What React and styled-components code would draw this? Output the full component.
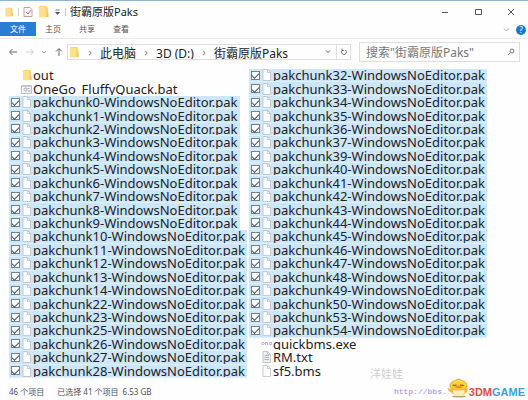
import React, { useState } from "react";
import styled, { createGlobalStyle, css } from "styled-components";

const leftNumbers = [0, 1, 2, 3, 4, 5, 6, 7, 8, 9, 10, 11, 12, 13, 14, 22, 23, 25, 26, 27, 28];
const rightNumbers = [32, 33, 34, 35, 36, 37, 39, 40, 41, 42, 43, 44, 45, 46, 47, 48, 49, 50, 53, 54];

const pak = (n) => ({ name: `pakchunk${n}-WindowsNoEditor.pak`, type: "file", selected: true });

const columns = [
  [
    { name: "out", type: "folder" },
    { name: "OneGo_FluffyQuack.bat", type: "bat" },
    ...leftNumbers.map(pak),
  ],
  [
    ...rightNumbers.map(pak),
    { name: "quickbms.exe", type: "exe" },
    { name: "RM.txt", type: "text" },
    { name: "sf5.bms", type: "file" },
  ],
];

function FolderIcon({ size = 12 }) {
  return (
    <svg width={size} height={size} viewBox="0 0 12 12" aria-hidden="true">
      <path d="M2 1h7.5v1.5h.8V11H2z" fill="#f5d472" />
      <path d="M2 1.5l6 .5v9.5L2 11z" fill="#fde08a" />
      <path d="M9.5 7h1v4h-1z" fill="#e8bd4b" />
    </svg>
  );
}

function FileIcon({ type }) {
  if (type === "folder") return <FolderIcon />;
  if (type === "bat") {
    return (
      <svg width="12" height="12" viewBox="0 0 12 12" aria-hidden="true">
        <path d="M.5 2.5h10v8H.5z" fill="#f3f5f6" stroke="#bcc2c6" />
        <path d="M1 3.5h9" stroke="#c5cbd0" />
        <circle cx="4.5" cy="6.5" r="1.5" fill="none" stroke="#9ea8af" />
        <path d="M7 8h2.500M6.500 5.500h2" stroke="#a8b0b5" />
      </svg>
    );
  }
  if (type === "exe") {
    return (
      <svg width="12" height="12" viewBox="0 0 12 12" aria-hidden="true">
        <g fill="none" stroke="#b5aee6">
          <circle cx="2" cy="5.500" r="1.300" />
          <path d="M4.500 7V4.500h2V7M8.500 4.500h2v2h-2z" />
        </g>
      </svg>
    );
  }
  return (
    <svg width="12" height="12" viewBox="0 0 12 12" aria-hidden="true">
      <path d="M2 .5h4.500l3 3v8H2z" fill={type === "text" ? "#eceeef" : "#fdfdfd"} stroke="#b9bfc4" strokeWidth=".8" />
      <path d="M6.500.5v3h3" fill="none" stroke="#b9bfc4" strokeWidth=".8" />
      {type === "text" && <path d="M3.500 4.500h4.500M3.500 6.500h4.500M3.500 8.500h4.500" stroke="#adb3b8" />}
    </svg>
  );
}

function Duck() {
  return (
    <svg width="22" height="20" viewBox="0 0 22 20" aria-hidden="true">
      <ellipse cx="12" cy="18.500" rx="7" ry="1" fill="#b9a470" />
      <path d="M0 10l5 1 12 0 4-1-1 4-4 3H8l-3-2-3-2z" fill="#f2b72c" />
      <path d="M6 11h11c2 4-1 7-5 7s-7-3-6-7z" fill="#ffeeb5" />
      <path d="M3 8C3 3 8 3 9 2l3-1 2 1c4 1 6 3 6 6 0 3-4 4-8 4S3 11 3 8z" fill="#fbd038" stroke="#d99a17" strokeWidth=".7" />
      <path d="M7 4.500c3-2 7-2 9 0" fill="none" stroke="#ffe989" />
      <path d="M5.500 7.500l4-.5M13 7l4 .5" fill="none" stroke="#7a5516" strokeWidth="1.200" />
      <path d="M7 9l4.500-1.500L16 9l-2 1H9z" fill="#e58c1f" />
    </svg>
  );
}

function App() {
  const [picked, setPicked] = useState(() =>
    columns.flat().filter((f) => f.selected).map((f) => f.name)
  );

  const toggle = (name) =>
    setPicked((old) => (old.includes(name) ? old.filter((n) => n !== name) : [...old, name]));

  return (
    <Window>
      <GlobalStyle />
      <TitleBar>
        <FolderIcon size={10} />
        <Divider />
        <svg width="10" height="12" viewBox="0 0 10 12" aria-hidden="true">
          <path d="M1 1.500h6l2 2v7H1z" fill="#fff" stroke="#b5a3a0" />
          <path d="M3 6l2 2 3-4" fill="none" stroke="#d1685d" />
        </svg>
        <FolderIcon size={13} />
        <svg width="7" height="8" viewBox="0 0 7 8" aria-hidden="true">
          <path d="M1.500 2h4" stroke="#777" />
          <path d="M1 4h5L3.500 7z" fill="#555" />
        </svg>
        <Divider />
        <Title>街霸原版Paks</Title>
        <WindowButton aria-label="最小化">
          <svg width="10" height="10" viewBox="0 0 10 10"><path d="M2 5.500h6" stroke="#555" /></svg>
        </WindowButton>
        <WindowButton aria-label="最大化">
          <svg width="10" height="10" viewBox="0 0 10 10"><path d="M2.500 2.500h6v5h-6z" fill="none" stroke="#555" /></svg>
        </WindowButton>
        <WindowButton aria-label="关闭">
          <svg width="10" height="10" viewBox="0 0 10 10"><path d="M2 2l6 6M8 2l-6 6" stroke="#555" /></svg>
        </WindowButton>
      </TitleBar>

      <Ribbon>
        <Tab $active>文件</Tab>
        <Tab>主页</Tab>
        <Tab>共享</Tab>
        <Tab>查看</Tab>
        <RibbonEnd>
          <svg width="7" height="6" viewBox="0 0 7 6" aria-hidden="true">
            <path d="M1 1.500l2.500 2.500L6 1.500" fill="none" stroke="#aaa" />
          </svg>
          <Help aria-label="帮助">?</Help>
        </RibbonEnd>
      </Ribbon>

      <NavRow>
        <NavButtons>
          <NavButton aria-label="后退">
            <svg width="10" height="10" viewBox="0 0 10 10"><path d="M9 5H2M4.500 2l-3 3 3 3" fill="none" stroke="#666" /></svg>
          </NavButton>
          <NavButton aria-label="前进">
            <svg width="10" height="10" viewBox="0 0 10 10"><path d="M1 5h7M5.500 2l3 3-3 3" fill="none" stroke="#ccc" /></svg>
          </NavButton>
          <NavButton aria-label="最近">
            <svg width="6" height="10" viewBox="0 0 6 10"><path d="M1 4l2 2 2-2" fill="none" stroke="#999" /></svg>
          </NavButton>
          <NavButton aria-label="上移">
            <svg width="10" height="10" viewBox="0 0 10 10"><path d="M5 9V2M2 4.500l3-3 3 3" fill="none" stroke="#666" /></svg>
          </NavButton>
        </NavButtons>
        <Address>
          <FolderIcon />
          <Chevron />
          <Crumb href="#pc">此电脑</Crumb>
          <Chevron />
          <Crumb href="#d">3D (D:)</Crumb>
          <Chevron />
          <Crumb href="#paks">街霸原版Paks</Crumb>
          <AddressEnd>
            <NavButton aria-label="展开">
              <svg width="8" height="8" viewBox="0 0 8 8"><path d="M2 2.500l2 2 2-2" fill="none" stroke="#555" /></svg>
            </NavButton>
            <Refresh aria-label="刷新">
              <svg width="8" height="8" viewBox="0 0 8 8">
                <path d="M5.500 2a2.500 2.500 0 1 1-3 0M2 .5v2h2" fill="none" stroke="#777" />
              </svg>
            </Refresh>
          </AddressEnd>
        </Address>
        <SearchBox>
          <SearchInput aria-label="搜索" placeholder={'搜索"街霸原版Paks"'} />
          <svg width="8" height="8" viewBox="0 0 8 8" aria-hidden="true">
            <circle cx="5" cy="3" r="2" fill="none" stroke="#777" />
            <path d="M3.500 4.500L1 7" stroke="#777" />
          </svg>
        </SearchBox>
      </NavRow>

      <Files>
        {columns.map((files, i) => (
          <Column key={i}>
            {files.map((file) => {
              const checked = picked.includes(file.name);
              return (
                <Row key={file.name} $checked={checked}>
                  <Check type="checkbox" checked={checked} onChange={() => toggle(file.name)} />
                  <FileIcon type={file.type} />
                  <span>{file.name}</span>
                </Row>
              );
            })}
          </Column>
        ))}
      </Files>

      <StatusBar>
        <span>46 个项目</span>
        <Selection>
          <span>已选择 {picked.length} 个项目</span>
          <span>6.53 GB</span>
        </Selection>
      </StatusBar>

      <Author>洋娃娃</Author>
      <Watermark>
        <Url>http://bbs.</Url>
        <Duck />
        <Brand $color="#dc4a42">3DM</Brand>
        <Brand $color="#3ba3cd">GAME</Brand>
      </Watermark>
    </Window>
  );
}

const GlobalStyle = createGlobalStyle`
  * {
    box-sizing: border-box;
  }

  body {
    margin: 0;
    background: #fff;
    font-family: "Noto Sans", "Noto Sans CJK SC", sans-serif;
    color: #222;
  }

  button {
    border: 0;
    padding: 0;
    background: none;
    font-family: inherit;
  }

  svg {
    display: block;
    flex: none;
  }
`;

const Window = styled.div`
  position: relative;
  display: flex;
  flex-direction: column;
  min-height: 100vh;
  background: #fefefe;
  border-top: 1px solid #91b5cf;
`;

const TitleBar = styled.header`
  display: flex;
  align-items: center;
  gap: 4px;
  height: 21px;
  padding: 0 3px 0 4px;
`;

const Divider = styled.span`
  width: 1px;
  height: 8px;
  background: #ccc;
`;

const Title = styled.h1`
  flex: 1;
  margin: 0;
  font-size: 11px;
  line-height: 20px;
  font-weight: 400;
  white-space: nowrap;
`;

const WindowButton = styled.button`
  display: grid;
  place-items: center;
  width: 29px;
  height: 20px;
`;

const Ribbon = styled.nav`
  display: flex;
  height: 17px;
  border-bottom: 1px solid #e6e8ea;
`;

const Tab = styled.button`
  width: 34px;
  height: 14px;
  font-size: 8px;
  line-height: 14px;
  color: #555;

  ${({ $active }) =>
    $active &&
    css`
      width: 36px;
      background: #2b7cd3;
      color: #fff;
    `}
`;

const RibbonEnd = styled.div`
  display: flex;
  align-items: center;
  gap: 6px;
  margin-left: auto;
  padding-right: 2px;
`;

const Help = styled.button`
  width: 10px;
  height: 10px;
  border-radius: 50%;
  background: #1979ca;
  color: #fff;
  font-size: 8px;
  line-height: 10px;
`;

const NavRow = styled.div`
  display: flex;
  align-items: center;
  gap: 8px;
  height: 26px;
  padding: 0 8px;
`;

const NavButtons = styled.div`
  display: flex;
  align-items: center;
  justify-content: space-between;
  width: 56px;
  margin-right: -5px;
`;

const NavButton = styled.button`
  display: grid;
  place-items: center;
`;

const Address = styled.div`
  display: flex;
  align-items: center;
  flex: 1;
  height: 16px;
  overflow: hidden;
  border: 1px solid #dedede;
`;

const Chevron = styled.span`
  width: 20px;
  flex: none;
  text-align: center;
  font-size: 10px;
  line-height: 14px;
  color: #777;

  &::before {
    content: "›";
  }
`;

const Crumb = styled.a`
  height: 14px;
  font-size: 12px;
  line-height: 18px;
  color: #222;
  text-decoration: none;
  white-space: nowrap;
`;

const AddressEnd = styled.div`
  display: flex;
  align-items: center;
  gap: 4px;
  margin-left: auto;
`;

const Refresh = styled(NavButton)`
  width: 14px;
  height: 14px;
  border-left: 1px solid #dedede;
`;

const SearchBox = styled.div`
  display: flex;
  align-items: center;
  width: 161px;
  height: 20px;
  padding: 0 4px 0 6px;
  border: 1px solid #dedede;
`;

const SearchInput = styled.input`
  flex: 1;
  min-width: 0;
  height: 18px;
  padding: 0;
  border: 0;
  outline: 0;
  background: none;
  font-family: inherit;
  font-size: 12px;

  &::placeholder {
    color: #777;
  }
`;

const Files = styled.main`
  display: flex;
  flex: 1;
  gap: 2px;
  padding: 4px 8px 0 9px;
`;

const Column = styled.div`
  display: grid;
  grid-auto-rows: minmax(13px, 1fr);
`;

const Row = styled.label`
  display: flex;
  align-items: center;
  width: fit-content;
  min-height: 0;
  padding: 0 2px;
  overflow: hidden;
  border-bottom: 1px solid ${({ $checked }) => ($checked ? "#e0f1fe" : "transparent")};
  background: ${({ $checked }) => ($checked ? "#cce6fb" : "none")};
  font-size: 13px;
  line-height: 12px;
  white-space: nowrap;
`;

const Check = styled.input`
  appearance: none;
  display: grid;
  place-items: center;
  flex: none;
  width: 9px;
  height: 9px;
  margin: 0 1px 0 0;
  border: 1px solid #74828e;
  background: #fff;
  opacity: 0;

  &:checked {
    opacity: 1;
  }

  &:checked::after {
    content: "";
    width: 6px;
    height: 3px;
    border-left: 1px solid #555;
    border-bottom: 1px solid #555;
    transform: rotate(-45deg);
  }
`;

const StatusBar = styled.footer`
  display: flex;
  align-items: center;
  gap: 13px;
  height: 22px;
  padding: 6px 9px 0;
  font-size: 8px;
  line-height: 12px;
  color: #46525e;
`;

const Selection = styled.div`
  display: flex;
  gap: 4px;
`;

const Author = styled.div`
  position: absolute;
  right: 125px;
  bottom: 18px;
  font-size: 11px;
  line-height: 16px;
  color: #d0d0d0;
`;

const Watermark = styled.div`
  position: absolute;
  right: 3px;
  bottom: 2px;
  display: flex;
  align-items: flex-end;
`;

const Url = styled.span`
  font-family: "Liberation Mono", monospace;
  font-size: 8px;
  font-weight: 700;
  line-height: 12px;
  color: #b9a5ea;
`;

const Brand = styled.span`
  font-family: "Liberation Sans", sans-serif;
  font-size: 11px;
  font-weight: 700;
  line-height: 12px;
  color: ${({ $color }) => $color};
`;

export default App;
